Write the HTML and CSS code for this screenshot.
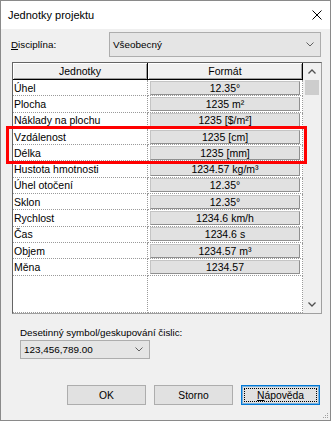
FILE: index.html
```html
<!DOCTYPE html>
<html lang="cs">
<head>
	<meta charset="utf-8">
	<title>Jednotky projektu</title>
	<link rel="stylesheet" href="styles.css">
</head>
<body>
	<div class="dialog">
		<div class="titlebar">
			<span class="title">Jednotky projektu</span>
			<svg class="close" width="10" height="10" viewBox="0 0 10 10">
				<path d="M0.5 0.5 L9.5 9.5 M9.5 0.5 L0.5 9.5" stroke="#000" stroke-width="1" fill="none"/>
			</svg>
		</div>

		<div class="content">
			<div class="discipline">
				<span><u>D</u>isciplína:</span>
				<div class="combo combo-wide">
					<span>Všeobecný</span>
					<svg class="chevron" width="8" height="5" viewBox="0 0 8 5"><path d="M0.5 0.5 L4 4 L7.5 0.5" stroke="#606060" fill="none"/></svg>
				</div>
			</div>

			<!-- tabulka jednotek -->
			<div class="units">
				<div class="grid">
					<div class="head">Jednotky</div>
					<div class="head">Formát</div>

					<div class="name">Úhel</div>
					<div class="fmt"><span class="btn">12.35°</span></div>
					<div class="name">Plocha</div>
					<div class="fmt"><span class="btn">1235 m²</span></div>
					<div class="name">Náklady na plochu</div>
					<div class="fmt"><span class="btn">1235 [$/m²]</span></div>
					<div class="name">Vzdálenost</div>
					<div class="fmt"><span class="btn">1235 [cm]</span></div>
					<div class="name">Délka</div>
					<div class="fmt"><span class="btn">1235 [mm]</span></div>
					<div class="name">Hustota hmotnosti</div>
					<div class="fmt"><span class="btn">1234.57 kg/m³</span></div>
					<div class="name">Úhel otočení</div>
					<div class="fmt"><span class="btn">12.35°</span></div>
					<div class="name">Sklon</div>
					<div class="fmt"><span class="btn">12.35°</span></div>
					<div class="name">Rychlost</div>
					<div class="fmt"><span class="btn">1234.6 km/h</span></div>
					<div class="name">Čas</div>
					<div class="fmt"><span class="btn">1234.6 s</span></div>
					<div class="name">Objem</div>
					<div class="fmt"><span class="btn">1234.57 m³</span></div>
					<div class="name">Měna</div>
					<div class="fmt"><span class="btn">1234.57</span></div>

					<div class="name filler"></div>
					<div class="fmt filler"></div>
				</div>
				<div class="scroll">
					<div class="arrow">
						<svg width="8" height="5" viewBox="0 0 8 5"><path d="M0.5 4.5 L4 1 L7.5 4.5" stroke="#505050" stroke-width="1.3" fill="none"/></svg>
					</div>
					<div class="track"><div class="thumb"></div></div>
					<div class="arrow">
						<svg width="8" height="5" viewBox="0 0 8 5"><path d="M0.5 0.5 L4 4 L7.5 0.5" stroke="#505050" stroke-width="1.3" fill="none"/></svg>
					</div>
				</div>
			</div>

			<div class="decimal">
				<span>Desetinný symbol/geskupování čislic:</span>
				<div class="combo combo-small">
					<span>123,456,789.00</span>
					<svg class="chevron" width="8" height="5" viewBox="0 0 8 5"><path d="M0.5 0.5 L4 4 L7.5 0.5" stroke="#606060" fill="none"/></svg>
				</div>
			</div>

			<div class="buttons">
				<button>OK</button>
				<button>Storno</button>
				<button class="default"><u>N</u>ápověda</button>
			</div>
		</div>

		<!-- červené zvýraznění přes tabulku -->
		<div class="highlight"></div>

		<svg class="grip" width="7" height="7" viewBox="0 0 7 7">
			<rect x="5" y="1" width="1" height="1" fill="#a0a0a0"/>
			<rect x="3" y="3" width="1" height="1" fill="#a0a0a0"/>
			<rect x="5" y="3" width="1" height="1" fill="#a0a0a0"/>
			<rect x="1" y="5" width="1" height="1" fill="#a0a0a0"/>
			<rect x="3" y="5" width="1" height="1" fill="#a0a0a0"/>
			<rect x="5" y="5" width="1" height="1" fill="#a0a0a0"/>
		</svg>
	</div>
</body>
</html>
```

FILE: styles.css
```css
* {
	box-sizing: border-box;
}

body {
	margin: 0;
	font-family: "Liberation Sans", Arial, sans-serif;
	color: #000;
}

.dialog {
	width: 331px;
	height: 421px;
	border: 1px solid #8a8a8a;
	background: #f0f0f0;
	display: flex;
	flex-direction: column;
	position: relative;
}

.titlebar {
	height: 28px;
	background: #fff;
	display: flex;
	align-items: center;
	justify-content: space-between;
	padding: 0 8px 0 7px;
	font-size: 11px;
}

.content {
	flex: 1;
	padding: 3px 9px 0 10px;
	font-size: 9.8px;
}

.discipline {
	display: grid;
	grid-template-columns: 98px 1fr;
	align-items: center;
}

.combo {
	display: flex;
	align-items: center;
	justify-content: space-between;
	background: #e5e5e5;
	border: 1px solid #adadad;
	padding: 0 6px 0 3px;
}

.combo-wide {
	height: 25px;
	font-size: 9.9px;
}

.combo-small {
	width: 130px;
	height: 19px;
	margin-top: 2px;
	font-size: 9.9px;
}

.units {
	display: flex;
	height: 252px;
	margin: 5px -1px 0 1px;
	border: 1px solid #a0a0a0;
	border-top-color: #646464;
	border-left-color: #646464;
	background: #fff;
	font-size: 10.5px;
}

.grid {
	display: grid;
	grid-template-columns: 135px 155px;
	grid-template-rows: 17px repeat(12, 16.3px) 1fr;
}

.head {
	background: #f0f0f0;
	border-right: 1px solid #000;
	border-bottom: 1px solid #000;
	box-shadow: inset 1px 1px 0 #fff, inset -1px -1px 0 #a0a0a0;
	display: flex;
	align-items: center;
	justify-content: center;
}

.name {
	padding-left: 1px;
	border-right: 1px dotted #9a9a9a;
	border-bottom: 1px dotted #9a9a9a;
	display: flex;
	align-items: center;
	white-space: nowrap;
}

.fmt {
	padding: 0 2px;
	border-right: 1px dotted #9a9a9a;
	border-bottom: 1px dotted #9a9a9a;
	display: flex;
	align-items: center;
}

.btn {
	flex: 1;
	height: 14px;
	line-height: 12px;
	text-align: center;
	background: #e1e1e1;
	border: 1px solid #c4c4c4;
	border-right-color: #8f8f8f;
	border-bottom-color: #8f8f8f;
}

.scroll {
	flex: 1;
	display: flex;
	flex-direction: column;
	background: #f0f0f0;
}

.arrow {
	height: 17px;
	display: flex;
	align-items: center;
	justify-content: center;
}

.track {
	flex: 1;
	padding: 0 2px;
}

.thumb {
	height: 15px;
	background: #cdcdcd;
}

.decimal {
	margin: 13px 0 0 9px;
	display: flex;
	flex-direction: column;
	align-items: flex-start;
}

.buttons {
	display: flex;
	justify-content: flex-end;
	gap: 8px;
	margin-top: 26px;
	padding-right: 1px;
}

button {
	width: 79px;
	height: 20px;
	padding: 0;
	font-family: inherit;
	font-size: 10.3px;
	color: #000;
	background: #e1e1e1;
	border: 1px solid #adadad;
}

button.default {
	border-color: #0078d7;
	box-shadow: inset 0 0 0 1px rgba(0, 120, 215, 0.45);
	outline: 1px dotted #000;
	outline-offset: -4px;
}

.highlight {
	position: absolute;
	left: 5px;
	top: 125px;
	width: 301px;
	height: 38px;
	border: 3px solid #f00;
}

.grip {
	position: absolute;
	right: 1px;
	bottom: 1px;
}
```
